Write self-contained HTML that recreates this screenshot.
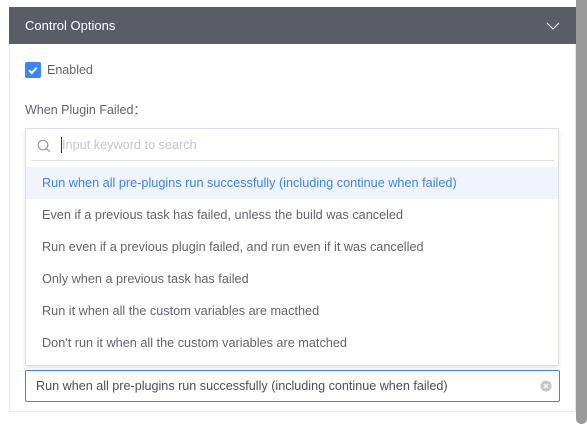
<!DOCTYPE html>
<html><head><style>
*{margin:0;padding:0;box-sizing:border-box}
body{width:587px;height:426px;background:#fff;font-family:"Liberation Sans",sans-serif;font-size:12px;color:#63656e;position:relative;overflow:hidden}
.sb{position:absolute;left:576px;top:0;width:11px;height:424px;background:#9b9b9b;border-radius:0 0 5px 5px}
.panel{position:absolute;left:9px;top:7px;width:567px;height:405px;border:1px solid #e6e8ee;border-top:none}
.hd{position:absolute;left:9px;top:7px;width:567px;height:37px;background:#5a5d66;color:#fff;font-size:13px;line-height:37px;padding-left:16px}
.cb{position:absolute;left:25px;top:62px;width:16px;height:16px;background:#3a84ff;border-radius:2px}
.t{position:absolute;white-space:nowrap}
.dd{position:absolute;left:25px;top:128px;width:534px;height:238px;border:1px solid #dcdee5;border-radius:2px;box-shadow:0 2px 4px rgba(0,0,0,.1);background:#fff}
.line{position:absolute;left:5px;top:31px;width:523px;height:1px;background:#dcdee5}
.opt{position:absolute;left:0;width:532px;height:32px;line-height:32px;padding-left:16px;font-size:12.7px}
.inp{position:absolute;left:25px;top:370px;width:535px;height:32px;border:1px solid #3a84ff;border-radius:2px;line-height:30px;padding-left:10px;color:#4d4f56;font-size:12.6px}
</style></head><body>
<div class="sb"></div>
<div class="panel"></div>
<div class="hd">Control Options
<svg style="position:absolute;left:537px;top:15px" width="14" height="8" viewBox="0 0 14 8"><path d="M1 1l6 6 6-6" stroke="#fff" fill="none" stroke-width="1"/></svg></div>
<div class="cb"><svg width="16" height="16" viewBox="0 0 16 16"><path d="M4 8.2l2.8 2.8 5-5.5" stroke="#fff" stroke-width="2" fill="none"/></svg></div>
<div class="t" style="left:47px;top:62px;line-height:16px;font-size:12.5px">Enabled</div>
<div class="t" style="left:25px;top:102px;line-height:16px;font-size:12.5px">When Plugin Failed：</div>
<div class="dd">
<svg style="position:absolute;left:11px;top:10px" width="14" height="14" viewBox="0 0 14 14"><circle cx="6" cy="6" r="4.8" stroke="#979ba5" stroke-width="1.2" fill="none"/><path d="M9.5 9.5l3.5 3.5" stroke="#979ba5" stroke-width="1.2"/></svg>
<div style="position:absolute;left:35px;top:8px;width:1px;height:16px;background:#333"></div>
<div class="t" style="left:36px;top:8px;line-height:16px;color:#c4c6cc;font-size:12.7px">Input keyword to search</div>
<div class="line"></div>
<div class="opt" style="top:38px;background:#f0f4fa;color:#3a84ff">Run when all pre-plugins run successfully (including continue when failed)</div>
<div class="opt" style="top:70px">Even if a previous task has failed, unless the build was canceled</div>
<div class="opt" style="top:102px">Run even if a previous plugin failed, and run even if it was cancelled</div>
<div class="opt" style="top:134px">Only when a previous task has failed</div>
<div class="opt" style="top:166px">Run it when all the custom variables are macthed</div>
<div class="opt" style="top:198px">Don't run it when all the custom variables are matched</div>
</div>
<div class="inp">Run when all pre-plugins run successfully (including continue when failed)
<svg style="position:absolute;left:514px;top:9px" width="12" height="12" viewBox="0 0 12 12"><circle cx="6" cy="6" r="5.5" fill="#c4c6cc"/><path d="M4 4l4 4M8 4l-4 4" stroke="#fff" stroke-width="1.2"/></svg></div>
</body></html>
